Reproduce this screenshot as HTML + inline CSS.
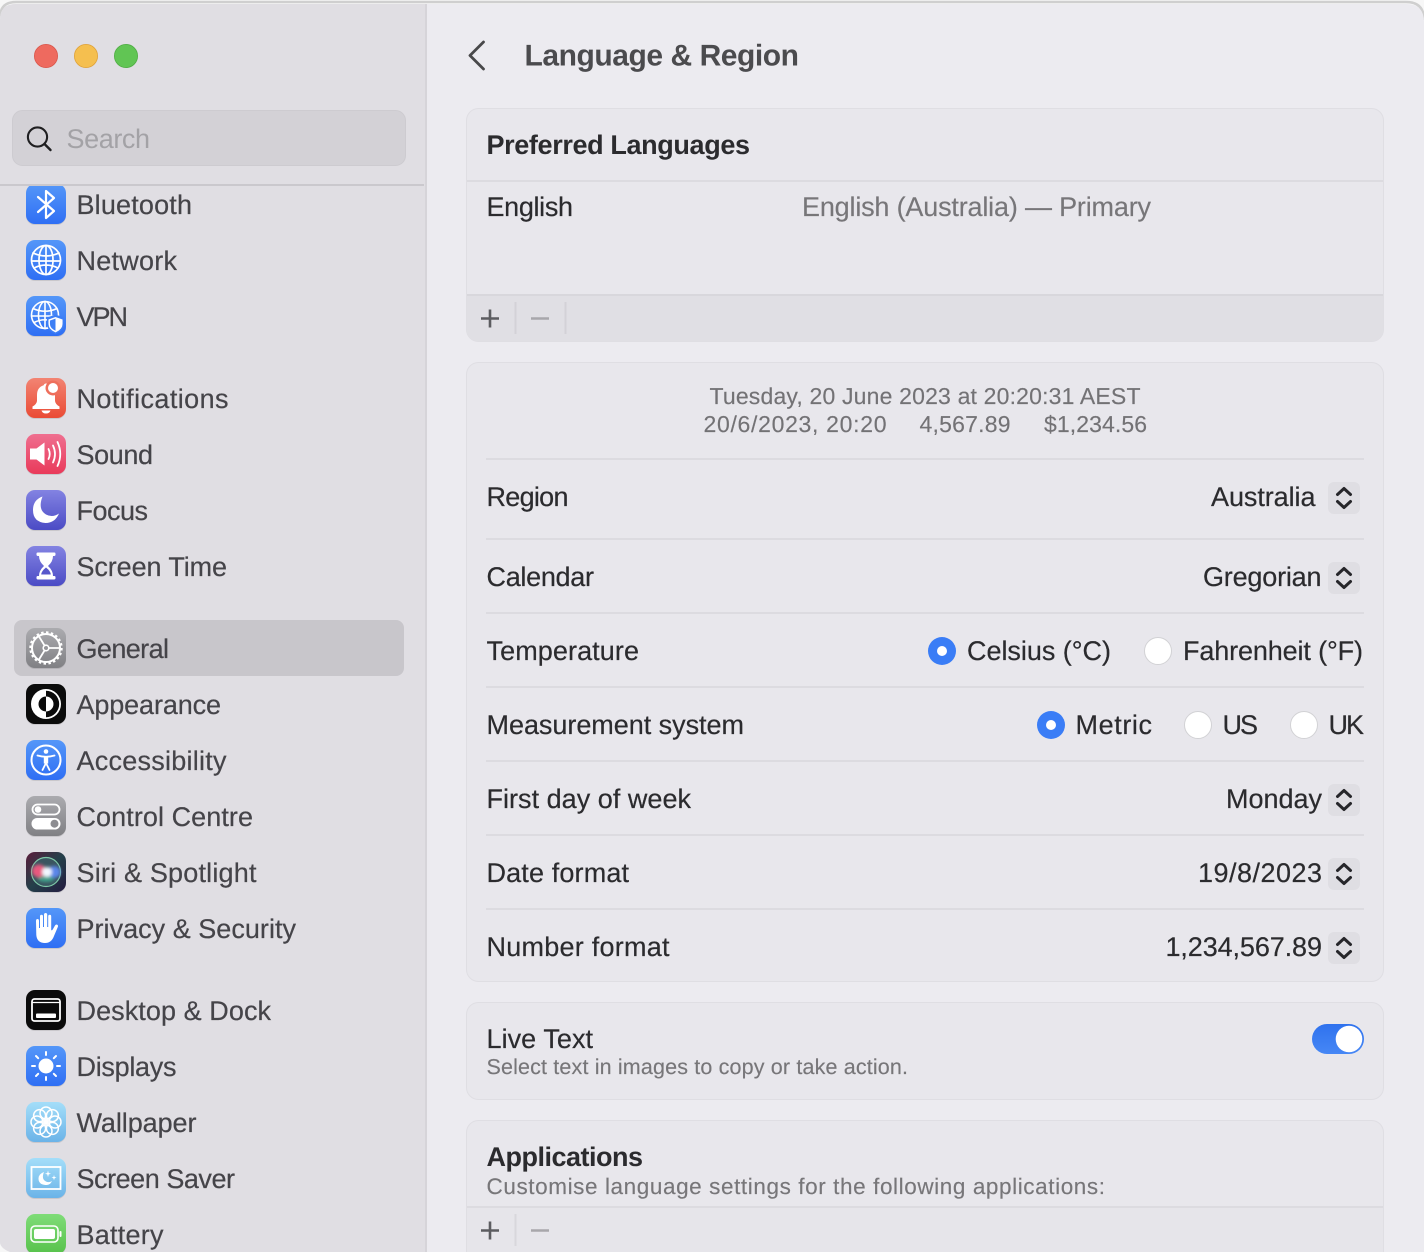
<!DOCTYPE html>
<html lang="en">
<head>
<meta charset="utf-8">
<title>Language &amp; Region</title>
<style>
html,body{margin:0;padding:0;background:#fff;width:1424px;height:1252px;overflow:hidden}
svg{display:block}
text{font-family:"Liberation Sans",sans-serif;font-size:27px;text-rendering:geometricPrecision}
.s{fill:#454449;stroke:#454449;stroke-width:.2}
.m{fill:#2b2b2e;stroke:#2b2b2e;stroke-width:.2}
.g{fill:#777679;stroke:#777679;stroke-width:.15}
.d{font-size:23px;fill:#737275;stroke:#737275;stroke-width:.15}
.sub{font-size:21.5px;fill:#777679;stroke:#777679;stroke-width:.15}
.b{font-weight:bold;fill:#2b2b2e}
.w{fill:none;stroke:#fff;stroke-width:1.8;stroke-linecap:round;stroke-linejoin:round}
.f{fill:#fff}
.sep{fill:#dcdbe0}
</style>
</head>
<body>
<svg xmlns="http://www.w3.org/2000/svg" width="1424" height="1252" viewBox="0 0 1424 1252">
<defs>
<linearGradient id="blue" x1="0" y1="0" x2="0" y2="1"><stop offset="0" stop-color="#5497f8"/><stop offset="1" stop-color="#2f6ff4"/></linearGradient>
<linearGradient id="red" x1="0" y1="0" x2="0" y2="1"><stop offset="0" stop-color="#f28473"/><stop offset="1" stop-color="#ea4b35"/></linearGradient>
<linearGradient id="pink" x1="0" y1="0" x2="0" y2="1"><stop offset="0" stop-color="#ef6f90"/><stop offset="1" stop-color="#e93a5a"/></linearGradient>
<linearGradient id="ind" x1="0" y1="0" x2="0" y2="1"><stop offset="0" stop-color="#8383e2"/><stop offset="1" stop-color="#4b4bc5"/></linearGradient>
<linearGradient id="gray" x1="0" y1="0" x2="0" y2="1"><stop offset="0" stop-color="#ababaf"/><stop offset="1" stop-color="#808084"/></linearGradient>
<linearGradient id="sky" x1="0" y1="0" x2="0" y2="1"><stop offset="0" stop-color="#a4def9"/><stop offset="1" stop-color="#6bb3e8"/></linearGradient>
<linearGradient id="green" x1="0" y1="0" x2="0" y2="1"><stop offset="0" stop-color="#7fdc78"/><stop offset="1" stop-color="#58c24c"/></linearGradient>
<linearGradient id="tog" x1="0" y1="0" x2="0" y2="1"><stop offset="0" stop-color="#2f72ee"/><stop offset="1" stop-color="#4687f5"/></linearGradient>
<linearGradient id="siri" x1="0" y1="0" x2="1" y2="1"><stop offset="0" stop-color="#5a1c3a"/><stop offset=".5" stop-color="#24404a"/><stop offset="1" stop-color="#241a40"/></linearGradient>
<filter id="bl" x="-30%" y="-30%" width="160%" height="160%"><feGaussianBlur stdDeviation="1.6"/></filter>
<clipPath id="win"><path d="M0 20Q0 4 16 4H1406Q1424 4 1424 22V1252H10Q0 1248 0 1242Z"/></clipPath>
</defs>

<rect width="1424" height="1252" fill="#f7f7f7"/>
<path d="M0 18Q0 2 16 2H1406Q1424 2 1424 20" fill="none" stroke="#cfcfcf" stroke-width="2.5"/>
<g clip-path="url(#win)">
<rect width="1424" height="1252" fill="#ecebf0"/>
<rect width="425" height="1252" fill="#e0dee3"/>
<rect x="425" width="2" height="1252" fill="#d6d4d9"/>

<!-- traffic lights -->
<circle cx="46" cy="56" r="11.6" fill="#ee6a5f" stroke="#d9574c" stroke-width=".8"/>
<circle cx="86" cy="56" r="11.6" fill="#f5bf4f" stroke="#dfa23a" stroke-width=".8"/>
<circle cx="126" cy="56" r="11.6" fill="#61c554" stroke="#50ad45" stroke-width=".8"/>

<!-- search -->
<rect x="12.5" y="110.5" width="393" height="55" rx="10" fill="#d3d1d6" stroke="#cdcbd0"/>
<circle cx="37.5" cy="137" r="9.6" fill="none" stroke="#1f1f21" stroke-width="2.1"/>
<path d="M44.5 144L50.5 150" stroke="#1f1f21" stroke-width="2.4" stroke-linecap="round"/>
<text x="66.5" y="148" textLength="83.5" fill="#a3a2a6">Search</text>

<!-- selection -->
<rect x="14" y="620" width="390" height="56" rx="8" fill="#c8c6cb"/>

<!-- sidebar labels -->
<text class="s" x="76.5" y="214" textLength="115.5">Bluetooth</text>
<text class="s" x="76.5" y="270" textLength="100.5">Network</text>
<text class="s" x="76.5" y="326" textLength="51.5">VPN</text>
<text class="s" x="76.5" y="408" textLength="152">Notifications</text>
<text class="s" x="76.5" y="464" textLength="76.5">Sound</text>
<text class="s" x="76.5" y="520" textLength="71.5">Focus</text>
<text class="s" x="76.5" y="576" textLength="150.5">Screen Time</text>
<text class="s" x="76.5" y="658" textLength="92.5">General</text>
<text class="s" x="76.5" y="714" textLength="144.5">Appearance</text>
<text class="s" x="76.5" y="770" textLength="150">Accessibility</text>
<text class="s" x="76.5" y="826" textLength="176.5">Control Centre</text>
<text class="s" x="76.5" y="882" textLength="180">Siri &amp; Spotlight</text>
<text class="s" x="76.5" y="938" textLength="219.5">Privacy &amp; Security</text>
<text class="s" x="76.5" y="1020" textLength="194.5">Desktop &amp; Dock</text>
<text class="s" x="76.5" y="1076" textLength="100">Displays</text>
<text class="s" x="76.5" y="1132" textLength="120">Wallpaper</text>
<text class="s" x="76.5" y="1188" textLength="158.5">Screen Saver</text>
<text class="s" x="76.5" y="1244" textLength="87">Battery</text>

<!-- Bluetooth -->
<g transform="translate(26 184)">
<rect y="1" width="40" height="40" rx="9" fill="#000" opacity=".1"/><rect width="40" height="40" rx="9" fill="url(#blue)"/>
<path class="w" style="stroke-width:2.2" d="M12 13L28 27L20 34V7L28 14L12 28"/>
</g>
<!-- Network -->
<g transform="translate(26 240)">
<rect y="1" width="40" height="40" rx="9" fill="#000" opacity=".1"/><rect width="40" height="40" rx="9" fill="url(#blue)"/>
<g class="w" style="stroke-width:1.7"><circle cx="20" cy="20" r="14.5"/><ellipse cx="20" cy="20" rx="7" ry="14.5"/><path d="M20 5.5V34.5M7 13Q20 19 33 13M5.6 21H34.4M8 28Q20 22 32 28"/></g>
</g>
<!-- VPN -->
<g transform="translate(26 296)">
<rect y="1" width="40" height="40" rx="9" fill="#000" opacity=".1"/><rect width="40" height="40" rx="9" fill="url(#blue)"/>
<g class="w" style="stroke-width:1.6"><circle cx="19" cy="19" r="13.5"/><ellipse cx="19" cy="19" rx="6.5" ry="13.5"/><path d="M19 5.5V32.5M7 12.5Q19 18 31 12.5M5.5 20H32.5M8 26.5Q19 21 30 26.5"/></g>
<path d="M29.5 18.5L38 21.5V28Q38 34.5 29.5 38Q21 34.500 21 28V21.500Z" fill="#3d7ff5"/>
<path d="M29.500 21.800L35.800 24V28Q35.800 32.700 29.500 35.600Q23.200 32.700 23.200 28V24Z" fill="none" stroke="#fff" stroke-width="1.500"/>
<path d="M29.500 22.500L35.500 24.500V28Q35.500 32.500 29.500 35Z" fill="#fff"/>
</g>
<!-- Notifications -->
<g transform="translate(26 378)">
<rect y="1" width="40" height="40" rx="9" fill="#000" opacity=".1"/><rect width="40" height="40" rx="9" fill="url(#red)"/>
<path class="f" d="M20 5.500Q21.800 5.500 22.300 7.300Q29 9.500 29 18V23Q29.500 26.500 33.500 28.500V31H6.500V28.500Q10.500 26.500 11 23V17Q11 9.500 17.700 7.300Q18.200 5.500 20 5.500Z"/>
<path class="f" d="M15.500 32.500H24.500Q23.500 35.500 20 35.500Q16.500 35.500 15.500 32.500Z"/>
<circle cx="27" cy="10" r="7.500" fill="#ee6f5c"/><circle cx="27" cy="10" r="5" fill="#fff"/>
</g>
<!-- Sound -->
<g transform="translate(26 434)">
<rect y="1" width="40" height="40" rx="9" fill="#000" opacity=".1"/><rect width="40" height="40" rx="9" fill="url(#pink)"/>
<path class="f" d="M4 14.500H10.500L18.500 8.500V31.500L10.500 25.500H4Z"/>
<path class="w" d="M22.500 15Q25 20 22.500 25M27 11.500Q31 20 27 28.500M31.500 8Q37 20 31.500 32"/>
</g>
<!-- Focus -->
<g transform="translate(26 490)">
<rect y="1" width="40" height="40" rx="9" fill="#000" opacity=".1"/><rect width="40" height="40" rx="9" fill="url(#ind)"/>
<path class="f" d="M16.500 6.500Q11.500 19.500 20 24.500Q26.500 28 33 23.500Q29 33 19.500 33Q7 32 7 20Q7 10 16.500 6.500Z"/>
</g>
<!-- Screen Time -->
<g transform="translate(26 546)">
<rect y="1" width="40" height="40" rx="9" fill="#000" opacity=".1"/><rect width="40" height="40" rx="9" fill="url(#ind)"/>
<rect x="10.500" y="6.500" width="19" height="3.500" rx="1.200" class="f"/><rect x="10.500" y="30" width="19" height="3.500" rx="1.200" class="f"/>
<path class="f" d="M13 10H27Q27 15.500 22 20Q27 24.500 27 30H13Q13 24.500 18 20Q13 15.500 13 10Z"/>
<path d="M20 21.500Q15.500 25 15.200 28.500H24.800Q24.500 25 20 21.500Z" fill="#5858cb"/>
</g>
<!-- General -->
<g transform="translate(26 628)">
<rect y="1" width="40" height="40" rx="9" fill="#000" opacity=".1"/><rect width="40" height="40" rx="9" fill="url(#gray)"/>
<circle cx="20" cy="20" r="14" fill="none" stroke="#fff" stroke-width="2"/>
<circle cx="20" cy="20" r="15.300" fill="none" stroke="#fff" stroke-width="2.800" stroke-dasharray="2.400 2.400"/>
<circle cx="20" cy="20" r="2.800" fill="none" stroke="#fff" stroke-width="1.600"/>
<path class="w" d="M22.800 20H33M18.600 17.600L13 8.500M18.600 22.400L13 31.500"/>
</g>
<!-- Appearance -->
<g transform="translate(26 684)">
<rect y="1" width="40" height="40" rx="9" fill="#000" opacity=".1"/><rect width="40" height="40" rx="9" fill="#0b0b0b"/>
<circle cx="20" cy="20" r="15" fill="#fff"/>
<path d="M20 6.800A13.200 13.200 0 0 1 20 33.200Z" fill="#0b0b0b"/>
<circle cx="20" cy="20" r="7.500" fill="#0b0b0b"/>
<path d="M20 12.500A7.500 7.500 0 0 1 20 27.500Z" fill="#fff"/>
</g>
<!-- Accessibility -->
<g transform="translate(26 740)">
<rect y="1" width="40" height="40" rx="9" fill="#000" opacity=".1"/><rect width="40" height="40" rx="9" fill="url(#blue)"/>
<circle cx="20" cy="20" r="14.500" fill="none" stroke="#fff" stroke-width="2"/>
<circle cx="20" cy="11.500" r="2.300" class="f"/>
<path class="w" d="M11.500 15.500Q20 18 28.500 15.500M20 17V23M20 23L16.500 30M20 23L23.500 30"/>
<path d="M17.800 16.500H22.200V23.500H17.800Z" class="f"/>
</g>
<!-- Control Centre -->
<g transform="translate(26 796)">
<rect y="1" width="40" height="40" rx="9" fill="#000" opacity=".1"/><rect width="40" height="40" rx="9" fill="url(#gray)"/>
<rect x="6.500" y="8.500" width="27" height="10" rx="5" fill="none" stroke="#fff" stroke-width="1.800"/>
<circle cx="12" cy="13.500" r="3.300" class="f"/>
<rect x="5.500" y="22" width="29" height="11.500" rx="5.700" class="f"/>
<circle cx="28.500" cy="27.700" r="4" fill="#8d8d91"/>
</g>
<!-- Siri -->
<g transform="translate(26 852)">
<rect y="1" width="40" height="40" rx="9" fill="#000" opacity=".1"/><rect width="40" height="40" rx="9" fill="url(#siri)"/>
<circle cx="20" cy="20" r="14.500" fill="#3a5560" stroke="#7ec8a8" stroke-width="1.200"/>
<g filter="url(#bl)">
<ellipse cx="13" cy="19" rx="7" ry="6.500" fill="#e8587e"/>
<ellipse cx="28" cy="20" rx="6.500" ry="6" fill="#5a86e8"/>
<ellipse cx="20" cy="27" rx="8" ry="3" fill="#3fa08a"/>
<ellipse cx="21" cy="20" rx="5" ry="5" fill="#f2f8ff"/>
</g>
</g>
<!-- Privacy -->
<g transform="translate(26 908)">
<rect y="1" width="40" height="40" rx="9" fill="#000" opacity=".1"/><rect width="40" height="40" rx="9" fill="url(#blue)"/>
<path class="f" d="M10 13Q10 11 11.500 11Q13 11 13 13V20H14V8.500Q14 6.800 15.500 6.800Q17 6.800 17 8.500V19H18V6.800Q18 5 19.600 5Q21.200 5 21.200 6.800V19H22.200V8.500Q22.200 6.800 23.700 6.800Q25.200 6.800 25.200 8.500V22Q26 23 27 21L29 17.500Q30 16 31.300 16.700Q32.500 17.500 31.800 19L28 28Q25.500 35 19 35Q11 35 10.300 27Z"/>
</g>
<!-- Desktop -->
<g transform="translate(26 990)">
<rect y="1" width="40" height="40" rx="9" fill="#000" opacity=".1"/><rect width="40" height="40" rx="9" fill="#0b0b0b"/>
<rect x="6" y="9" width="28" height="22" rx="2.500" fill="none" stroke="#fff" stroke-width="1.800"/>
<path d="M6 12.500H34" stroke="#fff" stroke-width="1.200"/>
<rect x="10" y="23.500" width="20" height="4.500" rx="1" class="f"/>
</g>
<!-- Displays -->
<g transform="translate(26 1046)">
<rect y="1" width="40" height="40" rx="9" fill="#000" opacity=".1"/><rect width="40" height="40" rx="9" fill="url(#blue)"/>
<circle cx="20" cy="20" r="7.500" class="f"/>
<path class="w" style="stroke-width:2" d="M20 6V9M20 31V34M6 20H9M31 20H34M10 10L12.200 12.200M27.800 27.800L30 30M30 10L27.800 12.200M12.200 27.800L10 30"/>
</g>
<!-- Wallpaper -->
<g transform="translate(26 1102)">
<rect y="1" width="40" height="40" rx="9" fill="#000" opacity=".1"/><rect width="40" height="40" rx="9" fill="url(#sky)"/>
<g class="w" style="stroke-width:1.5">
<circle cx="20" cy="11" r="6"/><circle cx="20" cy="29" r="6"/><circle cx="11" cy="20" r="6"/><circle cx="29" cy="20" r="6"/>
<circle cx="13.600" cy="13.600" r="6"/><circle cx="26.400" cy="13.600" r="6"/><circle cx="13.600" cy="26.400" r="6"/><circle cx="26.400" cy="26.400" r="6"/>
</g>
<circle cx="20" cy="20" r="2.500" class="f"/>
</g>
<!-- Screen Saver -->
<g transform="translate(26 1158)">
<rect y="1" width="40" height="40" rx="9" fill="#000" opacity=".1"/><rect width="40" height="40" rx="9" fill="url(#sky)"/>
<rect x="5.500" y="9" width="29" height="22" fill="none" stroke="#fff" stroke-width="1.800"/>
<path class="f" d="M18 14Q15 21 20 23.500Q23 25 26 23Q24 27.500 19.500 27Q12.500 26.500 12.500 20.500Q12.500 16 18 14Z"/>
<path class="f" d="M22 12.500L22.700 15L25 15.700L22.700 16.400L22 19L21.300 16.400L19 15.700L21.300 15ZM28 17L28.600 19L30.500 19.600L28.600 20.200L28 22.200L27.400 20.200L25.500 19.600L27.400 19Z"/>
</g>
<!-- Battery -->
<g transform="translate(26 1214)">
<rect y="1" width="40" height="40" rx="9" fill="#000" opacity=".1"/><rect width="40" height="40" rx="9" fill="url(#green)"/>
<rect x="5" y="12" width="27" height="16" rx="4" fill="none" stroke="#fff" stroke-width="1.600"/>
<rect x="8" y="15" width="21" height="10" rx="2" class="f"/>
<rect x="33.500" y="17" width="2" height="6" rx="1" class="f"/>
</g>

<rect y="184" width="424" height="2" fill="#cac8cd"/>

<!-- Header -->
<path d="M483.500 42L470 55.500L483.500 69" fill="none" stroke="#48484a" stroke-width="2.800" stroke-linecap="round" stroke-linejoin="round"/>
<text x="524.500" y="65.500" textLength="274.500" font-weight="bold" style="font-size:30px" fill="#4b4b4e">Language &amp; Region</text>

<!-- Preferred Languages card -->
<rect x="466.500" y="108.500" width="917" height="233" rx="12" fill="#e8e7ec" stroke="#dfdee3"/>
<path d="M467 295H1383V329Q1383 341 1371 341H479Q467 341 467 329Z" fill="#e0dfe4"/>
<rect x="467" y="180" width="916" height="2" fill="#dcdbe0"/>
<rect x="467" y="294" width="916" height="2" fill="#d8d7dc"/>
<text class="b" x="486.500" y="154" textLength="263.500">Preferred Languages</text>
<text class="m" x="486.500" y="216" textLength="86.500">English</text>
<text class="g" x="802" y="216" textLength="349">English (Australia) — Primary</text>
<rect x="514.500" y="302" width="2" height="32" fill="#d3d2d7"/>
<rect x="564.500" y="302" width="2" height="32" fill="#d3d2d7"/>
<path d="M481 318.500H499M490 309.500V327.500" stroke="#5c5c60" stroke-width="2.600"/>
<path d="M531 318.500H549" stroke="#a8a7ab" stroke-width="2.600"/>

<!-- Region card -->
<rect x="466.500" y="362.500" width="917" height="619" rx="12" fill="#e8e7ec" stroke="#dfdee3"/>
<text class="d" x="709.500" y="404" textLength="431">Tuesday, 20 June 2023 at 20:20:31 AEST</text>
<text class="d" x="703.500" y="432" textLength="183">20/6/2023, 20:20</text>
<text class="d" x="919.500" y="432" textLength="91">4,567.89</text>
<text class="d" x="1044" y="432" textLength="103">$1,234.56</text>
<rect class="sep" x="486" y="458" width="878" height="2"/>
<rect class="sep" x="486" y="538" width="878" height="2"/>
<rect class="sep" x="486" y="612" width="878" height="2"/>
<rect class="sep" x="486" y="686" width="878" height="2"/>
<rect class="sep" x="486" y="760" width="878" height="2"/>
<rect class="sep" x="486" y="834" width="878" height="2"/>
<rect class="sep" x="486" y="908" width="878" height="2"/>

<text class="m" x="486.500" y="506" textLength="82">Region</text>
<text class="m" x="486.500" y="586" textLength="107.500">Calendar</text>
<text class="m" x="486.500" y="660" textLength="152.500">Temperature</text>
<text class="m" x="486.500" y="734" textLength="257.500">Measurement system</text>
<text class="m" x="486.500" y="808" textLength="204.500">First day of week</text>
<text class="m" x="486.500" y="882" textLength="142.500">Date format</text>
<text class="m" x="486.500" y="956" textLength="183">Number format</text>

<text class="m" x="1211" y="506" textLength="104.500">Australia</text>
<text class="m" x="1203" y="586" textLength="118.500">Gregorian</text>
<text class="m" x="1226" y="808" textLength="96">Monday</text>
<text class="m" x="1198" y="882" textLength="124">19/8/2023</text>
<text class="m" x="1165.500" y="956" textLength="156.500">1,234,567.89</text>

<!-- steppers -->
<g>
<g transform="translate(1328 482)"><rect width="32" height="32" rx="6" fill="#dfdee3"/><path d="M9.500 12.500L16 6.500L22.500 12.500M9.500 19.500L16 25.500L22.500 19.500" fill="none" stroke="#26262a" stroke-width="3" stroke-linecap="round" stroke-linejoin="round"/></g>
<g transform="translate(1328 562)"><rect width="32" height="32" rx="6" fill="#dfdee3"/><path d="M9.500 12.500L16 6.500L22.500 12.500M9.500 19.500L16 25.500L22.500 19.500" fill="none" stroke="#26262a" stroke-width="3" stroke-linecap="round" stroke-linejoin="round"/></g>
<g transform="translate(1328 784)"><rect width="32" height="32" rx="6" fill="#dfdee3"/><path d="M9.500 12.500L16 6.500L22.500 12.500M9.500 19.500L16 25.500L22.500 19.500" fill="none" stroke="#26262a" stroke-width="3" stroke-linecap="round" stroke-linejoin="round"/></g>
<g transform="translate(1328 858)"><rect width="32" height="32" rx="6" fill="#dfdee3"/><path d="M9.500 12.500L16 6.500L22.500 12.500M9.500 19.500L16 25.500L22.500 19.500" fill="none" stroke="#26262a" stroke-width="3" stroke-linecap="round" stroke-linejoin="round"/></g>
<g transform="translate(1328 932)"><rect width="32" height="32" rx="6" fill="#dfdee3"/><path d="M9.500 12.500L16 6.500L22.500 12.500M9.500 19.500L16 25.500L22.500 19.500" fill="none" stroke="#26262a" stroke-width="3" stroke-linecap="round" stroke-linejoin="round"/></g>
</g>

<!-- radios -->
<circle cx="942" cy="651" r="14" fill="#3a7df6"/><circle cx="942" cy="651" r="5" fill="#fff"/>
<text class="m" x="967" y="660" textLength="144">Celsius (°C)</text>
<circle cx="1158" cy="651" r="13.500" fill="#fff" stroke="#d2d2d5"/>
<text class="m" x="1183" y="660" textLength="180">Fahrenheit (°F)</text>
<circle cx="1051" cy="725" r="14" fill="#3a7df6"/><circle cx="1051" cy="725" r="5" fill="#fff"/>
<text class="m" x="1075.500" y="734" textLength="76.500">Metric</text>
<circle cx="1198" cy="725" r="13.500" fill="#fff" stroke="#d2d2d5"/>
<text class="m" x="1222.500" y="734" textLength="35.500">US</text>
<circle cx="1304" cy="725" r="13.500" fill="#fff" stroke="#d2d2d5"/>
<text class="m" x="1328.500" y="734" textLength="35.500">UK</text>

<!-- Live Text card -->
<rect x="466.500" y="1002.500" width="917" height="97" rx="12" fill="#e8e7ec" stroke="#dfdee3"/>
<text class="m" x="486.500" y="1048" textLength="106.500">Live Text</text>
<text class="sub" x="486.500" y="1074" textLength="421.500">Select text in images to copy or take action.</text>
<rect x="1312" y="1024" width="52" height="30" rx="15" fill="url(#tog)"/>
<circle cx="1349" cy="1039" r="13.300" fill="#fff"/>

<!-- Applications card -->
<rect x="466.500" y="1120.500" width="917" height="160" rx="12" fill="#e8e7ec" stroke="#dfdee3"/>
<rect x="467" y="1208" width="916" height="44" fill="#e6e5ea"/>
<rect x="467" y="1206" width="916" height="2" fill="#dcdbe0"/>
<text class="b" x="486.500" y="1166" textLength="156.500">Applications</text>
<text class="sub" x="486.500" y="1194" textLength="618.500" style="font-size:22.500px">Customise language settings for the following applications:</text>
<rect x="514.500" y="1214" width="2" height="32" fill="#d8d7dc"/>
<path d="M481 1230.500H499M490 1221.500V1239.500" stroke="#5c5c60" stroke-width="2.600"/>
<path d="M531 1230.500H549" stroke="#a8a7ab" stroke-width="2.600"/>
</g>
</svg>
</body>
</html>
